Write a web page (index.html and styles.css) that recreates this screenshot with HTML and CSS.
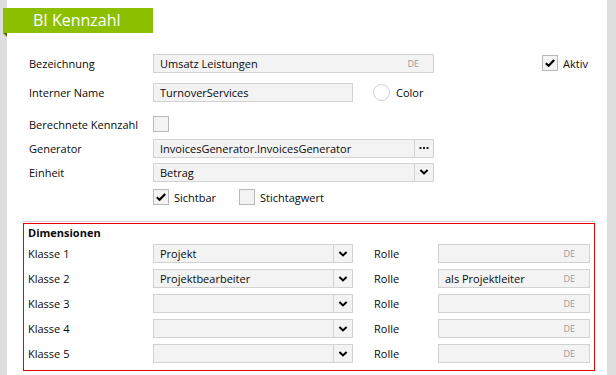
FILE: index.html
```html
<!DOCTYPE html>
<html lang="de">
<head>
<meta charset="utf-8">
<title>BI Kennzahl</title>
<link rel="stylesheet" href="styles.css">
</head>
<body>
<div class="page">
  <div class="title">BI Kennzahl</div>

  <div class="form">
    <div class="row r1">
      <span class="lbl">Bezeichnung</span>
      <div class="field w-lg"><span class="val">Umsatz Leistungen</span><span class="lang">DE</span></div>
      <div class="chk-group aktiv">
        <span class="check on"><svg viewBox="0 0 16 16" width="16" height="16"><path d="M3.8 8.2 L6.6 10.8 L12.2 5" fill="none" stroke="#000" stroke-width="2.2"/></svg></span>
        <span>Aktiv</span>
      </div>
    </div>

    <div class="row r2">
      <span class="lbl">Interner Name</span>
      <div class="field w-md"><span class="val">TurnoverServices</span></div>
      <span class="color-circle"></span>
      <span class="color-lbl">Color</span>
    </div>

    <div class="row r3">
      <span class="lbl">Berechnete Kennzahl</span>
      <span class="check"></span>
    </div>

    <div class="row r4">
      <span class="lbl">Generator</span>
      <div class="field combo w-lg">
        <span class="val">InvoicesGenerator.InvoicesGenerator</span>
        <span class="btn"><svg viewBox="0 0 10 4" width="10" height="4"><rect x="0.5" y="1" width="2" height="2" fill="#222"/><rect x="4" y="1" width="2" height="2" fill="#222"/><rect x="7.5" y="1" width="2" height="2" fill="#222"/></svg></span>
      </div>
    </div>

    <div class="row r5">
      <span class="lbl">Einheit</span>
      <div class="field combo w-lg">
        <span class="val">Betrag</span>
        <span class="btn"><svg viewBox="0 0 10 6" width="10" height="6"><path d="M1.4 1 L5 4.4 L8.6 1" fill="none" stroke="#000" stroke-width="2"/></svg></span>
      </div>
    </div>

    <div class="row r6">
      <span class="lbl"></span>
      <div class="chk-group first">
        <span class="check on"><svg viewBox="0 0 16 16" width="16" height="16"><path d="M3.8 8.2 L6.6 10.8 L12.2 5" fill="none" stroke="#000" stroke-width="2.2"/></svg></span>
        <span>Sichtbar</span>
      </div>
      <div class="chk-group">
        <span class="check"></span>
        <span>Stichtagwert</span>
      </div>
    </div>
  </div>

  <div class="group">
    <div class="box">
      <div class="dim-head">Dimensionen</div>

      <div class="drow">
        <span class="dlbl">Klasse 1</span>
        <div class="field combo w-md"><span class="val">Projekt</span><span class="btn"><svg viewBox="0 0 10 6" width="10" height="6"><path d="M1.4 1 L5 4.4 L8.6 1" fill="none" stroke="#000" stroke-width="2"/></svg></span></div>
        <span class="rlbl">Rolle</span>
        <div class="field w-sm"><span class="val"></span><span class="lang">DE</span></div>
      </div>

      <div class="drow">
        <span class="dlbl">Klasse 2</span>
        <div class="field combo w-md"><span class="val">Projektbearbeiter</span><span class="btn"><svg viewBox="0 0 10 6" width="10" height="6"><path d="M1.4 1 L5 4.4 L8.6 1" fill="none" stroke="#000" stroke-width="2"/></svg></span></div>
        <span class="rlbl">Rolle</span>
        <div class="field w-sm"><span class="val">als Projektleiter</span><span class="lang">DE</span></div>
      </div>

      <div class="drow">
        <span class="dlbl">Klasse 3</span>
        <div class="field combo w-md"><span class="val"></span><span class="btn"><svg viewBox="0 0 10 6" width="10" height="6"><path d="M1.4 1 L5 4.4 L8.6 1" fill="none" stroke="#000" stroke-width="2"/></svg></span></div>
        <span class="rlbl">Rolle</span>
        <div class="field w-sm"><span class="val"></span><span class="lang">DE</span></div>
      </div>

      <div class="drow">
        <span class="dlbl">Klasse 4</span>
        <div class="field combo w-md"><span class="val"></span><span class="btn"><svg viewBox="0 0 10 6" width="10" height="6"><path d="M1.4 1 L5 4.4 L8.6 1" fill="none" stroke="#000" stroke-width="2"/></svg></span></div>
        <span class="rlbl">Rolle</span>
        <div class="field w-sm"><span class="val"></span><span class="lang">DE</span></div>
      </div>

      <div class="drow">
        <span class="dlbl">Klasse 5</span>
        <div class="field combo w-md"><span class="val"></span><span class="btn"><svg viewBox="0 0 10 6" width="10" height="6"><path d="M1.4 1 L5 4.4 L8.6 1" fill="none" stroke="#000" stroke-width="2"/></svg></span></div>
        <span class="rlbl">Rolle</span>
        <div class="field w-sm"><span class="val"></span><span class="lang">DE</span></div>
      </div>
    </div>
  </div>
</div>
</body>
</html>
```

FILE: styles.css
```css
html, body {
  margin: 0;
  padding: 0;
}

body {
  background: #dedede;
  font-family: "Open Sans", "Noto Sans", sans-serif;
  font-size: 11px;
  color: #0a0a0a;
  width: 616px;
  height: 375px;
  overflow: hidden;
}

.page {
  margin: 0 9px 0 7px;
  height: 375px;
  background: #fff;
  padding-top: 8px;
  box-sizing: border-box;
}

.title {
  position: relative;
  margin-left: -4px;
  width: 150px;
  height: 25px;
  box-sizing: border-box;
  padding-left: 30px;
  background: #8cbf00;
  color: #fff;
  font-size: 16px;
  line-height: 25px;
}

.title::after {
  content: "";
  position: absolute;
  left: 0;
  top: 25px;
  border-top: 4px solid #4f6e00;
  border-left: 4px solid transparent;
}

.form {
  padding-left: 22px;
}

.row {
  display: flex;
  align-items: center;
  height: 20px;
}

.r1 { margin-top: 20px; }
.r2 { margin-top: 9px; }
.r3 { margin-top: 12px; }
.r4 { margin-top: 4px; }
.r5 { margin-top: 4px; }
.r6 { margin-top: 5px; }

.lbl {
  width: 124px;
  flex: none;
  white-space: nowrap;
}

.field {
  display: flex;
  align-items: center;
  height: 19px;
  box-sizing: border-box;
  border: 1px solid #d2d2d2;
  background: #f3f3f3;
  flex: none;
}

.field .val {
  flex: 1;
  padding-left: 6px;
  white-space: nowrap;
  overflow: hidden;
}

.field .lang {
  font-size: 9px;
  color: #9a9a9a;
  padding-right: 14px;
}

.w-lg { width: 281px; }
.w-md { width: 200px; }
.w-sm { width: 152px; }

.combo .btn {
  width: 18px;
  height: 17px;
  border-left: 1px solid #d2d2d2;
  display: flex;
  align-items: center;
  justify-content: center;
  flex: none;
}

.check {
  width: 16px;
  height: 16px;
  box-sizing: border-box;
  border: 1px solid #b9b9b9;
  background: #f3f3f3;
  display: inline-flex;
  align-items: center;
  justify-content: center;
  flex: none;
}

.check svg {
  margin: -1px;
}

.chk-group {
  display: flex;
  align-items: center;
  gap: 5px;
}

.chk-group.first {
  width: 86px;
}

.aktiv {
  margin-left: 108px;
}

.color-circle {
  width: 17px;
  height: 17px;
  box-sizing: border-box;
  border: 1px solid #cfcfcf;
  border-radius: 50%;
  background: #fff;
  margin-left: 20px;
  flex: none;
}

.color-lbl {
  margin-left: 6px;
}

.group {
  margin: 14px 12px 0 16px;
  border-top: 1px solid #d2d2d2;
  padding-top: 1px;
}

.box {
  height: 148px;
  box-sizing: border-box;
  border: 1px solid #e60000;
  padding-left: 4px;
}

.dim-head {
  height: 18px;
  line-height: 18px;
  font-weight: bold;
}

.drow {
  display: flex;
  align-items: center;
  height: 19px;
  margin-top: 6px;
}

.dim-head + .drow {
  margin-top: 2px;
}

.dlbl {
  width: 125px;
  flex: none;
}

.rlbl {
  width: 64px;
  margin-left: 21px;
  flex: none;
}
```
